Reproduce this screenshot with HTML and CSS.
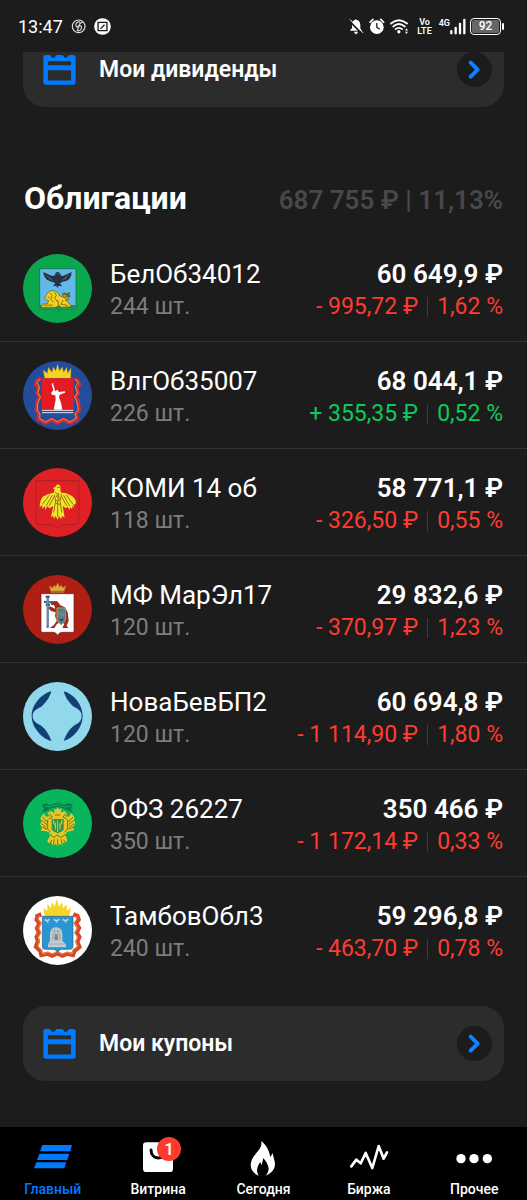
FILE: index.html
```html
<!DOCTYPE html>
<html lang="ru">
<head>
<meta charset="utf-8">
<meta name="viewport" content="width=device-width, initial-scale=1">
<title>Облигации</title>
<link rel="stylesheet" href="styles.css">
</head>
<body>
<svg class="defs" width="0" height="0" aria-hidden="true">
  <symbol id="calendar" viewBox="130 108 100 94">
    <path fill="currentColor" fill-rule="evenodd" d="M138 111H150C154 111 154 120 161 120S168 111 172 111H188C192 111 193 120 199 120S206 111 210 111H222Q229 111 229 119V193Q229 201 221 201H139Q131 201 131 193V119Q131 111 138 111ZM145 130V142H215V130ZM145 157V188H215V157Z"/>
  </symbol>
  <symbol id="chevron" viewBox="0 0 105 105">
    <path d="M41 32 62 53 41 74" fill="none" stroke="currentColor" stroke-width="12" stroke-linecap="round" stroke-linejoin="round"/>
  </symbol>
</svg>

<header class="status">
  <time class="clock">13:47</time>
  <svg class="note" viewBox="212 57 45 45" aria-hidden="true"><g fill="none" stroke="#ddd" stroke-width="3.5"><circle cx="235" cy="79" r="19"/><path d="M239 66C228 64 224 74 228 80 232 84 238 76 240 68L231 92M231 80C240 74 246 78 243 86 240 94 230 94 230 89M240 70 247 66"/></g></svg>
  <svg class="app" viewBox="281 54 50 50" aria-hidden="true"><circle cx="306" cy="79" r="24.500" fill="#fff"/><path d="M293 67H319V91H293ZM300 86 312 74" fill="none" stroke="#1c1c1c" stroke-width="4"/></svg>
  <span class="spacer"></span>
  <svg class="bell" viewBox="256 54 45 50" aria-hidden="true"><path d="M260 92V89L265 84V74Q266 61 275 59 276 55 279 59 289 62 290 74V84L294 92ZM271 95H283Q281 102 277 102T271 95Z" fill="#fff"/><path d="M257 62 295 101" stroke="#1c1c1c" stroke-width="5"/><path d="M259 58 298 98" stroke="#fff" stroke-width="3"/></svg>
  <svg class="alarm" viewBox="317 54 49 50" aria-hidden="true"><circle cx="341" cy="81" r="21" fill="#fff"/><path d="M341 68V82L350 87" fill="none" stroke="#1c1c1c" stroke-width="4"/><path d="M320 66 329 57M362 66 353 57" stroke="#fff" stroke-width="5" stroke-linecap="round"/></svg>
  <svg class="wifi" viewBox="382 54 58 50" aria-hidden="true"><g fill="none" stroke="#fff" stroke-width="5.500" stroke-linecap="round"><path d="M385 70Q409 50 434 70M392 79Q409 64 427 79M399 87Q409 79 419 87"/></g><circle cx="409" cy="95" r="5" fill="#fff"/><path d="M428 91 432 84 437 91ZM428 95H437L432 102Z" fill="#fff"/></svg>
  <span class="volte"><span>Vo</span><span>LTE</span></span>
  <span class="net">4G</span>
  <svg class="bars" viewBox="562 54 48 50" aria-hidden="true"><path d="M566 93V99M579 83V99M592 71V99M605 59V99" stroke="#fff" stroke-width="7" stroke-linecap="round"/></svg>
  <span class="battery"><span class="charge">92</span></span>
</header>

<main class="content">
  <a class="card card-top" href="#dividends">
    <svg class="card-icon" aria-hidden="true"><use href="#calendar"/></svg>
    <span class="card-title">Мои дивиденды</span>
    <span class="go"><svg aria-hidden="true"><use href="#chevron"/></svg></span>
  </a>

  <section class="bonds">
    <div class="heading">
      <h1>Облигации</h1>
      <p class="total">687 755 ₽ | 11,13%</p>
    </div>
    <ul class="list">
      <li class="row">
        <svg class="logo" viewBox="70 252 207 207" aria-hidden="true">
          <circle cx="173.500" cy="355.500" r="103.500" fill="#0aa84c"/>
          <path d="M120 296H229V417H184L174 427 164 417H120Z" fill="#62b8ea" stroke="#17633f" stroke-width="2"/>
          <path d="M121 405H228V416H184L174 425 164 416H121Z" fill="#16964a"/>
          <path d="M131 306 157 318 166 316 168 308 175 305 180 309 184 317 192 317 216 306Q216 318 209 327L200 333 189 335 181 340 187 349 177 347 174 354 170 347 160 349 167 339 151 334 140 328Q131 318 131 306Z" fill="#26323f"/>
          <path d="M138 315 152 325M146 323 160 331M209 314 194 325M202 323 187 330M172 312 178 310" stroke="#687078" stroke-width="2"/>
          <path d="M137 382 143 370Q149 361 160 362 174 363 180 378 196 380 201 391L204 397 211 402 214 410 184 412 179 406 168 412H125L128 403 144 401 147 391 137 389 134 382Z" fill="#f4d21c" stroke="#705d17" stroke-width="2"/>
          <path d="M197 391Q208 388 203 381 188 382 190 373 195 368 201 374M200 376 210 368M201 380 212 377" fill="none" stroke="#705d17" stroke-width="6"/>
          <path d="M197 391Q208 388 203 381 188 382 190 373" fill="none" stroke="#f4d21c" stroke-width="2"/>
          <path d="M151 369 158 377 153 387 161 397M164 367 170 376 165 384 173 395M144 382H150M133 406 159 405M190 390 184 403 204 406M175 390 176 406" fill="none" stroke="#765e13" stroke-width="2.500"/>
        </svg>
        <div class="name"><h2>БелОб34012</h2><p>244 шт.</p></div>
        <div class="value"><strong>60 649,9 ₽</strong><p class="down">- 995,72 ₽<i></i>1,62 %</p></div>
      </li>
      <li class="row">
        <svg class="logo" viewBox="40 33 207 207" aria-hidden="true">
          <circle cx="143.500" cy="136.500" r="103.500" fill="#234c9b"/>
          <path d="M93 85 83 91 78 103 87 114 82 130 91 140 82 153 80 181 87 191 85 207 107 219 125 209 143 219 162 209 181 219 203 207 199 191 209 181 205 151 197 140 206 130 200 114 210 103 203 91 194 85" fill="none" stroke="#df2730" stroke-width="10"/>
          <path d="M92 87 82 97 89 110 85 129 92 142 84 160 83 180 91 193 90 206 108 216 126 206 143 215 162 206 181 216 200 204 196 192 206 180 202 156 195 142 204 129 197 110 206 97 196 87" fill="none" stroke="#f0a333" stroke-width="2.500"/>
          <path d="M105 85 101 60 113 70 116 52 127 67 131 51 138 62 144 43 149 62 158 51 162 67 171 52 174 70 184 54 183 85Z" fill="#f5d321" stroke="#a49435"/>
          <path d="M96 85H192V197H157Q148 198 144 204 140 198 131 197H96Z" fill="#e51b24"/>
          <path d="M97 178H191V197H156L144 203 132 197H97Z" fill="#244d9c"/>
          <path d="M97 181H191M97 188H191" stroke="#e4e6ef" stroke-width="3"/>
          <path d="M132 97 126 102 131 121 124 129 128 135 137 136 138 149 132 179H158L154 158 148 142 150 134 166 128 166 124 148 126 143 119 136 124 135 117 130 101Z" fill="#fff"/>
        </svg>
        <div class="name"><h2>ВлгОб35007</h2><p>226 шт.</p></div>
        <div class="value"><strong>68 044,1 ₽</strong><p class="up">+ 355,35 ₽<i></i>0,52 %</p></div>
      </li>
      <li class="row">
        <svg class="logo" viewBox="40 23 207 207" aria-hidden="true">
          <circle cx="143.500" cy="126.500" r="103.500" fill="#df2126"/>
          <path d="M79 61H208V182Q208 193 196 193H156L144 205 132 193H91Q79 193 79 182Z" fill="none" stroke="#ad1e25" stroke-width="3"/>
          <path d="M135 88 130 83 137 80Q140 70 148 73 154 77 152 88L154 97 168 98 187 107Q198 115 199 127L195 134 190 131 194 143 187 137 188 147 180 139 181 149 173 139 169 144 159 137 165 172 157 167 154 177 148 167 144 178 138 167 133 176 131 166 124 171 131 137 119 144 113 138 107 149 106 137 98 146 98 135 90 140Q91 119 99 109 113 100 132 97Z" fill="#eee82c"/>
          <path d="M136 96 147 102 144 125 144 169M149 99 139 108 150 113M156 101 151 121 156 157M134 103 138 122 132 157M120 103 98 132M128 105 109 137M134 108 118 138M169 103 190 132M162 105 180 137M156 108 171 137M136 116Q144 128 151 116M139 129 151 132M142 80 151 82" fill="none" stroke="#9e7017" stroke-width="3"/>
        </svg>
        <div class="name"><h2>КОМИ 14 об</h2><p>118 шт.</p></div>
        <div class="value"><strong>58 771,1 ₽</strong><p class="down">- 326,50 ₽<i></i>0,55 %</p></div>
      </li>
      <li class="row">
        <svg class="logo" viewBox="40 28 207 207" aria-hidden="true">
          <circle cx="143.500" cy="131.500" r="103.500" fill="#b01f13"/>
          <path d="M125 80 119 61 129 67 134 58 138 65 144 52 150 65 155 58 159 67 168 61 162 80Z" fill="#e4a83a" stroke="#c07a2a" stroke-width="2"/><path d="M125 77H163" stroke="#923b18" stroke-width="2"/>
          <path d="M94 84H193V197Q193 200 189 200H156Q149 200 144 209 139 200 131 200H98Q94 200 94 195Z" fill="#fff" stroke="#57231c" stroke-width="2"/>
          <path d="M133 118 125 118 122 111 133 106 143 107 152 119 166 125 174 140 177 165 171 181 177 187H158L164 174 153 168 141 176 134 187H120L133 178 141 166 136 151 138 140 124 136 116 128 120 122 137 129Z" fill="#9a2f20"/>
          <path d="M114 92V186M103 109H129M108 117H121M108 93H120" stroke="#264f75" stroke-width="6"/><path d="M114 95V182M106 109H125" stroke="#96bdd0" stroke-width="2"/>
          <path d="M142 127H167V162Q165 171 155 177 144 171 142 162Z" fill="#46749a" stroke="#c2a34c" stroke-width="3"/><path d="M147 135V155M154 133V165M161 135V155M148 160 155 169 161 161M147 143 161 149" stroke="#95a66d" stroke-width="2"/>
        </svg>
        <div class="name"><h2>МФ МарЭл17</h2><p>120 шт.</p></div>
        <div class="value"><strong>29 832,6 ₽</strong><p class="down">- 370,97 ₽<i></i>1,23 %</p></div>
      </li>
      <li class="row">
        <svg class="logo" viewBox="40 28 207 207" aria-hidden="true">
          <circle cx="143.500" cy="131.500" r="103.500" fill="#91d8ec"/>
          <path d="M125 56C94 64 66 97 66 130S94 197 125 205C119 186 110 172 95 159 80 152 69 145 69 130S80 109 95 102C110 89 119 76 125 56Z" fill="#123f74"/>
          <path d="M162 56C193 64 219 97 219 130S193 197 162 205C168 186 177 172 192 159 207 152 216 145 216 130S207 109 192 102C177 89 168 76 162 56Z" fill="#123f74"/>
        </svg>
        <div class="name"><h2>НоваБевБП2</h2><p>120 шт.</p></div>
        <div class="value"><strong>60 694,8 ₽</strong><p class="down">- 1 114,90 ₽<i></i>1,80 %</p></div>
      </li>
      <li class="row">
        <svg class="logo" viewBox="40 25 207 207" aria-hidden="true">
          <circle cx="143.500" cy="128.500" r="103.500" fill="#08b45c"/>
          <path d="M97 73 110 68 122 73 143 66 164 73 178 67 190 73 184 84 189 95 178 91 164 84 143 78 122 84 108 92 98 95 103 84Z" fill="#087b4b"/><path d="M106 76 120 79 143 72 165 79 183 76" fill="none" stroke="#20ac63" stroke-width="3"/>
          <path d="M133 84 139 87 144 80 149 87 156 82 154 96 164 91 173 99 167 107 178 108 184 97 194 108 193 118 197 128 190 139 193 149 182 151 171 155 167 163 173 179 168 187 160 186 157 193 149 190 143 195 138 190 129 193 124 186 115 187 113 179 121 167 118 155 106 151 94 151 97 140 91 131 96 122 92 113 102 98 109 108 120 107 113 98 122 91 135 97Z" fill="#e5c728"/>
          <path d="M99 109 112 124M96 119 112 132M95 129 110 140M98 139 112 146M190 109 176 124M192 119 177 132M193 129 179 140M191 139 177 146M120 99 128 109 118 115M168 99 160 109 171 115M136 103H152M126 178 122 188M134 176 131 190M144 176V193M154 176 157 190M162 177 167 187M121 161 133 171 142 162 153 171 168 161M114 117V145L123 155M174 117V145L164 155" fill="none" stroke="#6e722a" stroke-width="3"/>
          <path d="M126 115H162V146Q159 153 144 158 129 153 126 146Z" fill="#26954f"/><path d="M144 119V154M137 126V147M151 126V147M130 124 138 137M158 124 150 137M132 117V128M156 117V128" stroke="#e5c72b" stroke-width="3"/>
        </svg>
        <div class="name"><h2>ОФЗ 26227</h2><p>350 шт.</p></div>
        <div class="value"><strong>350 466 ₽</strong><p class="down">- 1 172,14 ₽<i></i>0,33 %</p></div>
      </li>
      <li class="row">
        <svg class="logo" viewBox="40 30 207 207" aria-hidden="true">
          <circle cx="143.500" cy="133.500" r="103.500" fill="#fff"/>
          <path d="M105 92 101 66 113 74 113 54 124 66 127 48 135 62 141 38 148 62 158 48 160 67 171 55 172 75 184 64 178 92Z" fill="#f5d52c"/>
          <path d="M95 85 83 90 81 101 89 112 82 127 88 140 81 153 85 166 79 182 92 195 95 207 114 203 128 209 143 202 158 209 173 203 190 207 194 195 209 183 203 167 209 153 201 140 208 126 199 112 207 101 203 90 191 85" fill="none" stroke="#d7472c" stroke-width="13"/>
          <path d="M90 90 85 98 94 111 87 127 94 140 86 153 89 168 85 180 96 193 100 204 115 198 129 204 143 196 157 204 173 198 187 203 191 191 204 181 198 168 203 153 195 140 203 126 194 110 202 98 197 90" fill="none" stroke="#edaf40" stroke-width="2.500"/>
          <path d="M98 91H190V184Q188 190 180 190H156Q148 191 144 199 139 190 130 190H108Q98 190 98 182Z" fill="#2796d3" stroke="#315f80" stroke-width="2"/>
          <path d="M105 100 112 105 120 100M114 102V110M132 100 140 105 149 100M141 102V110M159 100 167 105 176 100M168 102V110" fill="none" stroke="#b7d7e6" stroke-width="5"/>
          <path d="M121 164V144Q122 125 139 124T158 144V164L169 175V184H115V175Z" fill="#c5cbce"/><path d="M125 145H154M124 155H156M127 136H152M135 128V144M145 128V144M130 146V165M150 146V165M117 174H167" stroke="#899da8" stroke-width="2"/><path d="M135 163V149Q140 141 145 149V163Z" fill="#7c8990"/>
        </svg>
        <div class="name"><h2>ТамбовОбл3</h2><p>240 шт.</p></div>
        <div class="value"><strong>59 296,8 ₽</strong><p class="down">- 463,70 ₽<i></i>0,78 %</p></div>
      </li>
    </ul>
  </section>

  <a class="card" href="#coupons">
    <svg class="card-icon" aria-hidden="true"><use href="#calendar"/></svg>
    <span class="card-title">Мои купоны</span>
    <span class="go"><svg aria-hidden="true"><use href="#chevron"/></svg></span>
  </a>
</main>

<nav class="tabs">
  <a class="tab active" href="#main"><svg viewBox="98 440 120 120" aria-hidden="true"><path d="M126 464H215L210 483H119ZM117 490H207L201 509H110ZM108 516H198L192 534H101Z" fill="currentColor"/></svg><span>Главный</span></a>
  <a class="tab" href="#showcase"><span class="badged"><svg viewBox="414 440 120 120" aria-hidden="true"><rect x="429" y="456" width="90" height="89" rx="10" fill="currentColor"/><path d="M453 479C454 510 494 511 496 480" fill="none" stroke="#000" stroke-width="9" stroke-linecap="round"/></svg><b class="badge">1</b></span><span>Витрина</span></a>
  <a class="tab" href="#today"><svg viewBox="0 0 120 120" aria-hidden="true"><path d="M54 12C60 30 43 42 31 60 16 84 23 106 47 116 38 101 43 88 52 75L56 85 61 63C70 73 80 91 76 101 74 109 70 113 67 116 93 106 101 87 93 66L89 48 82 61C79 41 70 23 54 12Z" fill="currentColor"/></svg><span>Сегодня</span></a>
  <a class="tab" href="#exchange"><svg viewBox="259 440 120 120" aria-hidden="true"><path d="M266 528 281 508 294 519 309 488 329 533 348 467 363 505 373 486" fill="none" stroke="currentColor" stroke-width="8" stroke-linecap="round" stroke-linejoin="round"/></svg><span>Биржа</span></a>
  <a class="tab" href="#more"><svg viewBox="575 440 120 120" aria-hidden="true"><g fill="currentColor"><circle cx="596" cy="505" r="14"/><circle cx="635" cy="505" r="14"/><circle cx="675" cy="505" r="14"/></g></svg><span>Прочее</span></a>
</nav>
</body>
</html>
```
FILE: styles.css
```css
* { box-sizing: border-box; }
body {
  margin: 0;
  min-height: 100vh;
  display: flex;
  flex-direction: column;
  background: #1c1c1c;
  color: #fff;
  font-family: Roboto, "Liberation Sans", sans-serif;
}
h1, h2, p, ul { margin: 0; padding: 0; }
a { color: inherit; text-decoration: none; }
svg { display: block; flex: none; }
.defs { position: absolute; }

.status {
  display: flex;
  align-items: center;
  height: 52px;
  padding: 1px 26px 0 18px;
}
.clock { font-size: 18px; line-height: 24px; margin-right: 8px; }
.note { width: 15px; height: 15px; margin-right: 8px; }
.app { width: 17px; height: 17px; }
.spacer { flex: 1; }
.bell { width: 15px; height: 17px; margin-right: 5px; }
.alarm { width: 16px; height: 17px; margin-right: 5px; }
.wifi { width: 19px; height: 17px; margin-right: 8px; }
.volte {
  display: flex;
  flex-direction: column;
  align-items: center;
  margin-right: 7px;
  font-size: 9px;
  line-height: 9px;
  font-weight: 600;
}
.net { align-self: flex-start; margin-top: 17px; font-size: 9px; line-height: 10px; font-weight: 600; }
.bars { width: 16px; height: 17px; margin-right: 4px; }
.battery {
  position: relative;
  width: 31px;
  height: 17px;
  padding: 1px;
  border: 1px solid #fff;
  border-radius: 4px;
}
.battery::after {
  content: "";
  position: absolute;
  right: -4px;
  top: 4px;
  width: 2px;
  height: 7px;
  border-radius: 1px;
  background: #fff;
}
.charge {
  display: block;
  border-radius: 2px;
  background: #666;
  font-size: 12px;
  line-height: 13px;
  font-weight: 500;
  text-align: center;
}

.content { flex: 1; overflow: hidden; padding-bottom: 46px; }
.card {
  display: flex;
  align-items: center;
  height: 75px;
  margin: 22px 23px 0;
  padding: 0 12px 0 20px;
  border-radius: 22px;
  background: #2c2c2c;
}
.card-top { margin-top: -20px; }
.card-icon { width: 33px; height: 31px; color: #007aff; margin-right: 23px; }
.card-title { flex: 1; font-size: 23px; line-height: 32px; font-weight: 600; }
.go { width: 35px; height: 35px; border-radius: 50%; background: #1c1c1c; color: #147efb; }
.go svg { width: 35px; height: 35px; }

.heading {
  display: flex;
  align-items: baseline;
  justify-content: space-between;
  padding: 71px 24px 15px;
}
h1 { font-size: 32px; line-height: 40px; font-weight: 700; }
.total { font-size: 26px; line-height: 40px; font-weight: 600; color: #484848; }

.list { list-style: none; }
.row {
  display: flex;
  align-items: center;
  height: 107px;
  padding: 0 24px 0 23px;
  border-bottom: 1px solid #333;
}
.row:last-child { border-bottom-color: transparent; }
.logo { width: 69px; height: 69px; margin-right: 18px; }
.name { flex: 1; }
.name, .value { padding-top: 3px; }
.row h2, .row strong { display: block; font-size: 26px; line-height: 34px; white-space: nowrap; }
.row h2 { font-weight: 400; }
.row strong { font-weight: 600; }
.row p { font-size: 23px; line-height: 32px; white-space: nowrap; }
.name p { color: #7c7c7c; }
.value { text-align: right; }
.value i {
  display: inline-block;
  width: 1px;
  height: 20px;
  margin: 0 9px;
  background: #3c3c3c;
  vertical-align: -3px;
}
.value .down { color: #ff3b30; }
.value .up { color: #0cc95b; }

.tabs {
  display: grid;
  grid-template-columns: repeat(5, 1fr);
  height: 73px;
  padding-top: 10px;
  background: #000;
}
.tab { display: flex; flex-direction: column; align-items: center; font-size: 14px; line-height: 20px; font-weight: 500; }
.tab svg { width: 40px; height: 40px; margin-bottom: 2px; }
.active { color: #007aff; }
.badged { position: relative; }
.badge {
  position: absolute;
  left: 19px;
  top: 0;
  width: 24px;
  height: 24px;
  border-radius: 50%;
  background: #ff3b30;
  font-size: 17px;
  line-height: 24px;
  font-weight: 500;
  text-align: center;
}
```
